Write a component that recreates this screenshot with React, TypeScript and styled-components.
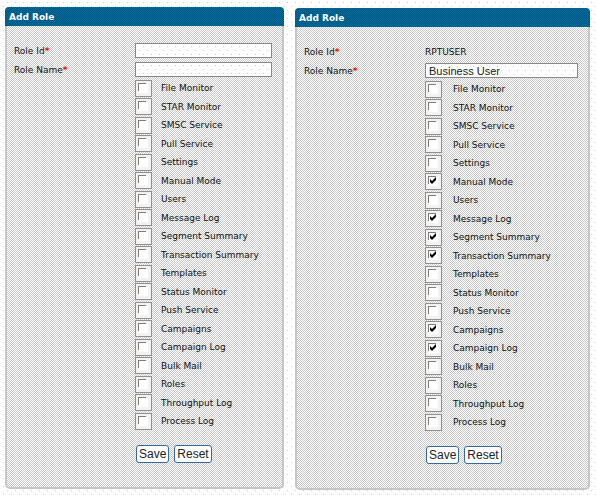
import React, { useId, useState } from "react";
import styled, { createGlobalStyle, css } from "styled-components";

const dotted = css`
  background:
    conic-gradient(at 1px 1px, transparent 75%, #ccc 0) 7px 2px / 8px 8px,
    conic-gradient(at 1px 1px, transparent 75%, #ccc 0) 3px 6px / 8px 8px,
    #fff;
`;

const Global = createGlobalStyle`
  * { box-sizing: border-box; }
  body {
    margin: 0;
    ${dotted}
    font-family: "DejaVu Sans", Verdana, sans-serif;
    font-size: 9px;
    color: #111;
  }
`;

const Page = styled.main`
  display: grid;
  grid-template-columns: 279fr 295fr;
  gap: 11px;
  padding: 7px 6px 5px 5px;
`;

const Panel = styled.form<{ $lower?: boolean }>`
  margin-top: ${(p) => (p.$lower ? 1 : 0)}px;
  margin-bottom: ${(p) => (p.$lower ? 0 : 1)}px;
  padding-bottom: 24px;
  border: 2px solid #c6c6c6;
  border-top: 0;
  border-radius: 5px;
  background: conic-gradient(#c8c8c8 25%, #fff 0 50%, #c8c8c8 0 75%, #fff 0) 0 0 / 2px 2px;
`;

const Title = styled.h2`
  margin: 0 -2px 15px;
  padding-left: 4px;
  height: 19px;
  line-height: 20px;
  border-radius: 4px 4px 0 0;
  font-size: 9px;
  font-weight: bold;
  color: #fff;
  background: conic-gradient(#006e9c 25%, #00527e 0 50%, #006e9c 0 75%, #00527e 0) 0 0 / 2px 2px;
`;

const Field = styled.div`
  display: grid;
  grid-template-columns: 121px 1fr;
  align-items: center;
  height: 19px;
  padding: 0 10px 0 7px;
`;

const Required = styled.span`
  color: #f00;
  font-weight: bold;
`;

const TextBox = styled.input`
  width: 100%;
  height: 15px;
  padding: 0 3px;
  border: 1px solid #888;
  border-radius: 0;
  ${dotted}
  font: 11px "Liberation Sans", Arial, sans-serif;
  color: #222;
`;

const Options = styled.ul<{ $gap: number }>`
  margin: 0;
  padding: 0 0 0 128px;
  list-style: none;
  li {
    display: flex;
    align-items: center;
    gap: ${(p) => p.$gap}px;
    height: 18px;
  }
  li:nth-child(even) {
    height: 19px;
  }
`;

const Box = styled.span`
  display: grid;
  width: 17px;
  height: 17px;
  > * {
    grid-area: 1 / 1;
  }
  svg {
    pointer-events: none;
  }
`;

const Check = styled.input`
  appearance: none;
  width: 17px;
  height: 17px;
  margin: 0;
  border: 1px solid #909090;
  background:
    linear-gradient(#887c70, #887c70) 2px 2px / 8px 1px no-repeat,
    linear-gradient(#887c70, #887c70) 2px 2px / 1px 8px no-repeat,
    linear-gradient(#fff, #fff) 3px 3px / 9px 9px no-repeat,
    #f2f2f2;
`;

const Actions = styled.div`
  display: flex;
  gap: 5px;
  padding: 15px 0 0 129px;
`;

const Button = styled.button`
  height: 18px;
  padding: 0 2px;
  border: 1px solid #36699c;
  border-radius: 3px;
  background: #fff;
  font: 12px/14px "Liberation Sans", Arial, sans-serif;
  color: #222;
`;

const names = [
  "File Monitor", "STAR Monitor", "SMSC Service", "Pull Service", "Settings",
  "Manual Mode", "Users", "Message Log", "Segment Summary", "Transaction Summary",
  "Templates", "Status Monitor", "Push Service", "Campaigns", "Campaign Log",
  "Bulk Mail", "Roles", "Throughput Log", "Process Log",
];

function Option({ name, initial }: { name: string; initial: boolean }) {
  const id = useId();
  const [on, setOn] = useState(initial);
  return (
    <li>
      <Box>
        <Check id={id} type="checkbox" checked={on} onChange={(e) => setOn(e.target.checked)} />
        {on && (
          <svg width="17" height="17" viewBox="0 0 17 17" aria-hidden="true">
            <path d="M5 6v3l2 2 4-4V4L7 8z" fill="#000" />
          </svg>
        )}
      </Box>
      <label htmlFor={id}>{name}</label>
    </li>
  );
}

function RolePanel({ roleId, roleName = "", granted = [], lower, gap }: {
  roleId?: string; roleName?: string; granted?: string[]; lower?: boolean; gap: number;
}) {
  const id = useId();
  return (
    <Panel $lower={lower} onSubmit={(e) => e.preventDefault()}>
      <Title>Add Role</Title>
      <Field>
        <label htmlFor={id + "i"}>Role Id<Required>*</Required></label>
        {roleId ? <output id={id + "i"}>{roleId}</output> : <TextBox id={id + "i"} />}
      </Field>
      <Field>
        <label htmlFor={id + "n"}>Role Name<Required>*</Required></label>
        <TextBox id={id + "n"} defaultValue={roleName} />
      </Field>
      <Options $gap={gap}>
        {names.map((n) => <Option key={n} name={n} initial={granted.includes(n)} />)}
      </Options>
      <Actions>
        <Button type="submit">Save</Button>
        <Button type="reset">Reset</Button>
      </Actions>
    </Panel>
  );
}

export default function App() {
  return (
    <>
      <Global />
      <Page>
        <RolePanel gap={9} />
        <RolePanel
          lower
          gap={11}
          roleId="RPTUSER"
          roleName="Business User"
          granted={["Manual Mode", "Message Log", "Segment Summary", "Transaction Summary", "Campaigns", "Campaign Log"]}
        />
      </Page>
    </>
  );
}
